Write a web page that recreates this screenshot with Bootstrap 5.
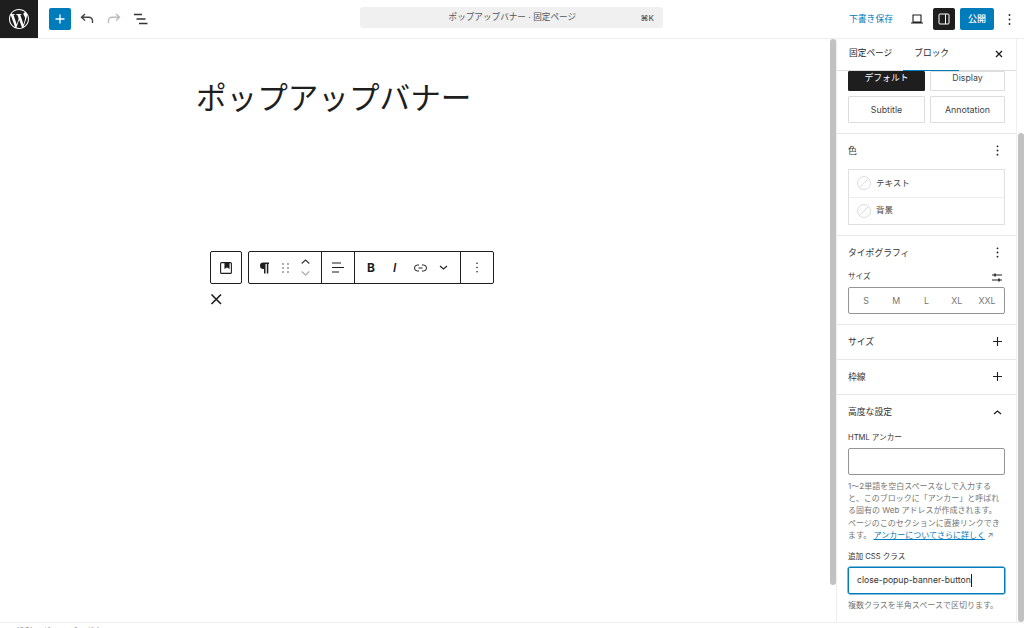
<!DOCTYPE html>
<html lang="ja"><head><meta charset="utf-8">
<link href="https://cdn.jsdelivr.net/npm/bootstrap@5.3.0/dist/css/bootstrap.min.css" rel="stylesheet">
<style>
html,body{height:628px;overflow:hidden;background:#fff}
body{font-family:Inter,"Noto Sans CJK JP",sans-serif;color:#1e1e1e;font-size:9px}
svg{display:block}
.ed-top{height:39px;border-bottom:1px solid #eee}
.ed-logo{width:38px;height:38px;background:#1e1e1e}
.ed-add{width:22px;height:22px;background:#007cba;border-radius:2px;margin-left:11px}
.ed-ic{width:27px}
.ed-undo{margin-left:9px}
.ed-cmd{position:absolute;left:360px;top:7px;width:303px;height:21px;background:#f0f0f0;border-radius:3px;font-size:8.6px;color:#555}
.ed-cmd span:first-child{flex:1;text-align:center;padding-left:24px}
.ed-cmd b{font-weight:500;padding-right:9px;font-size:8px}
.ed-save{color:#007cba;font-size:8.8px;margin-right:18px}
.ed-side-btn{width:22px;height:22px;background:#1e1e1e;border-radius:2px;margin:0 5px 0 10px}
.ed-pub{width:34px;height:22px;background:#007cba;color:#fff;border-radius:2px;font-size:9px;font-weight:500}
.ed-kebab{width:30px}
.ed-body{height:583px}
.ed-canvas{width:829px;position:relative}
.ed-title{font-size:30.6px;line-height:40px;position:absolute;left:196px;top:37px;margin:0;font-weight:400;font-family:"Noto Sans CJK JP",sans-serif}
.ed-bar{position:absolute;left:210px;top:212px;height:33px;gap:6px}
.ed-group{border:1px solid #1e1e1e;border-radius:2px;height:33px;background:#fff}
.ed-block{width:32px}
.ed-main{width:246px}
.ed-seg{height:100%;border-right:1px solid #1e1e1e}
.ed-seg1{width:73px;padding-left:10px;gap:12px}
.ed-seg2{width:33px}
.ed-seg3{width:106px;padding-left:12px}
.ed-b{font-size:12px;font-weight:700;width:24px;line-height:1}
.ed-i{font-size:12px;font-style:italic;font-weight:600;width:23px;padding-left:2px;line-height:1}
.ed-link{margin-right:12px}
.ed-x{position:absolute;left:209px;top:253px}
.ed-scroll{width:7px;padding-left:1px}
.ed-thumb{width:6px;background:#c1c1c1;border-radius:3px;height:546px}
.ed-thumb2{margin-top:94px;height:489px}
.ed-side{width:181px;border-left:1px solid #eee;border-right:1px solid #eee;position:relative}
.ed-tabs{height:32px;border-bottom:1px solid #ddd;padding:0 0 2px 12px;font-size:8.7px;position:relative}
.ed-tab2{margin-left:22px;position:relative}
.ed-ul{position:absolute;left:66px;width:56px;bottom:-1px;height:1.5px;background:#007cba}
.ed-tabx{position:absolute;right:13px;top:11px}
.ed-styles{display:grid;grid-template-columns:77px 75px;grid-template-rows:20px 27px;gap:5px;padding:0 11px;height:62px}
.ed-sty{border:1px solid #ddd;font-size:8.8px;color:#444;border-radius:1px}
.ed-sty.on{background:#1e1e1e;color:#fff;border-color:#1e1e1e}
.ed-clip{padding-bottom:6px}
.ed-panel{border-top:1px solid #e8e8e8;padding:0 11px;position:relative}
.ed-head{height:33px;font-size:8.8px;color:#333;margin-bottom:1px}
.ed-colors{border:1px solid #e0e0e0;height:56px;margin-top:2px;margin-bottom:10px}
.ed-crow{height:27px;padding:0 0 1px 8px;gap:5px;font-size:8.5px;color:#444}
.ed-crow+.ed-crow{border-top:1px solid #eee}
.ed-dis{width:14px;height:14px;border-radius:50%;border:1px solid #ddd;background:linear-gradient(135deg,transparent 48%,#ddd 48%,#ddd 54%,transparent 54%)}
.ed-lab{font-size:7.6px;color:#333}
.ed-rule{height:14px}
.ed-size{display:grid;grid-template-columns:repeat(5,1fr);text-align:center;align-items:center;border:1px solid #949494;border-radius:2px;height:27px;font-size:8.8px;color:#757575;padding:0 2px;margin:3px 0 10px}
.ed-input{border:1px solid #949494;border-radius:2px;height:27px;margin-top:4px;font-size:8.6px;color:#333;padding-left:8px}
.ed-input.foc{border-color:#007cba;box-shadow:0 0 0 .5px #007cba}
.ed-caret{width:1px;height:13px;background:#1e1e1e}
.ed-help{font-size:8px;line-height:12.2px;color:#757575;margin-top:5px;width:155px}
.ed-help a{color:#007cba}
.ed-help2{margin-top:5px}
.ed-lab1{margin-top:4px;line-height:12px}
.ed-lab2{margin-top:10px;line-height:12px}
.ed-dots{margin-right:6px}
.ed-plus{margin-right:3px}
.ed-sliders{margin-right:3px}
.ed-foot{height:6px;border-top:1px solid #eee;font-size:9px;color:#757575;padding:3px 0 0 16px;line-height:12px;overflow:hidden;white-space:nowrap}
</style></head>
<body>
<header class="ed-top d-flex align-items-center position-relative">
  <div class="ed-logo d-flex align-items-center justify-content-center">
    <svg width="20" height="20" viewBox="0 0 24 24" fill="#fff"><path d="M21.469 6.825c.84 1.537 1.318 3.3 1.318 5.175 0 3.979-2.156 7.456-5.363 9.325l3.295-9.527c.615-1.54.82-2.771.82-3.864 0-.405-.026-.78-.07-1.11m-7.981.105c.647-.03 1.232-.105 1.232-.105.582-.075.514-.93-.067-.899 0 0-1.755.135-2.88.135-1.064 0-2.85-.15-2.85-.15-.585-.03-.661.855-.075.885 0 0 .54.061 1.125.09l1.68 4.605-2.37 7.08L5.354 6.9c.649-.03 1.234-.1 1.234-.1.585-.075.516-.93-.065-.896 0 0-1.746.138-2.874.138-.2 0-.438-.008-.69-.015C4.911 3.15 8.235 1.215 12 1.215c2.809 0 5.365 1.072 7.286 2.833-.046-.003-.091-.009-.141-.009-1.06 0-1.812.923-1.812 1.914 0 .89.513 1.643 1.06 2.531.411.72.89 1.643.89 2.977 0 .915-.354 1.994-.821 3.479l-1.075 3.585-3.9-11.61.001.014zM12 22.784c-1.059 0-2.081-.153-3.048-.437l3.237-9.406 3.315 9.087c.024.053.05.101.078.149-1.12.393-2.325.609-3.582.609M1.211 12c0-1.564.336-3.05.935-4.39L7.29 21.709C3.694 19.96 1.212 16.271 1.211 12M12 0C5.385 0 0 5.385 0 12s5.385 12 12 12 12-5.385 12-12S18.615 0 12 0"/></svg>
  </div>
  <div class="ed-add d-flex align-items-center justify-content-center"><svg width="12" height="12" viewBox="0 0 12 12"><path d="M6 1.500v9M1.500 6h9" stroke="#fff" stroke-width="1.300"/></svg></div>
  <div class="d-flex align-items-center ed-undo">
    <div class="ed-ic"><svg width="14" height="12" viewBox="0 0 14 12" fill="none" stroke="#444" stroke-width="1.400"><path d="M5 1 1.500 4.300 5 7.500M1.500 4.300H9a3.500 3.500 0 0 1 3.500 3.500V10"/></svg></div>
    <div class="ed-ic"><svg width="14" height="12" viewBox="0 0 14 12" fill="none" stroke="#bbb" stroke-width="1.400"><path d="M9 1l3.500 3.300L9 7.500M12.500 4.300H5A3.500 3.500 0 0 0 1.500 7.800V10"/></svg></div>
    <div class="ed-ic"><svg width="14" height="12" viewBox="0 0 14 12" stroke="#333" stroke-width="1.300"><path d="M0 1.500h8M2.500 6h9M5 10.500h8.500"/></svg></div>
  </div>
  <div class="ed-cmd d-flex align-items-center"><span>ポップアップバナー · 固定ページ</span><b>⌘K</b></div>
  <div class="ms-auto d-flex align-items-center">
    <span class="ed-save">下書き保存</span>
    <svg width="12" height="10" viewBox="0 0 12 10" fill="none" stroke="#1e1e1e" stroke-width="1.100"><path d="M2 1h8v7H2zM0 9h12"/></svg>
    <div class="ed-side-btn d-flex align-items-center justify-content-center"><svg width="12" height="12" viewBox="0 0 12 12" fill="none" stroke="#fff" stroke-width="1"><rect x="1" y="1" width="10" height="10" rx="1"/><path d="M7.500 1v10"/></svg></div>
    <div class="ed-pub d-flex align-items-center justify-content-center">公開</div>
    <div class="ed-kebab d-flex align-items-center justify-content-center"><svg width="3" height="13" viewBox="0 0 3 13" fill="#1e1e1e"><circle cx="1.500" cy="2" r=".9"/><circle cx="1.500" cy="6.500" r=".9"/><circle cx="1.500" cy="11" r=".9"/></svg></div>
  </div>
</header>
<div class="ed-body d-flex">
  <main class="ed-canvas">
    <h1 class="ed-title">ポップアップバナー</h1>
    <div class="ed-bar d-flex">
      <div class="ed-group ed-block d-flex align-items-center justify-content-center"><svg width="12" height="12" viewBox="0 0 12 12" fill="none" stroke="#1e1e1e" stroke-width="1.100"><rect x=".6" y=".6" width="10.800" height="10.800" rx="1"/><path d="M5 .6h4v5.500L7 4.800 5 6.100z" fill="#1e1e1e"/></svg></div>
      <div class="ed-group ed-main d-flex align-items-center">
        <div class="ed-seg ed-seg1 d-flex align-items-center">
          <svg width="11" height="12" viewBox="0 0 11 12" fill="#1e1e1e"><path d="M10 .5H4.300a3.300 3.300 0 0 0 0 6.600H5v4.400h1.500V2h1.300v9.500h1.500V2H10z"/></svg>
          <svg width="7" height="10" viewBox="0 0 7 10" fill="#444"><circle cx="1" cy="1" r=".8"/><circle cx="6" cy="1" r=".8"/><circle cx="1" cy="5" r=".8"/><circle cx="6" cy="5" r=".8"/><circle cx="1" cy="9" r=".8"/><circle cx="6" cy="9" r=".8"/></svg>
          <svg width="9" height="17" viewBox="0 0 9 17" fill="none"><path d="M.7 4.500 4.500 1l3.800 3.500" stroke="#333" stroke-width="1.100"/><path d="M.7 12.500 4.500 16l3.800-3.500" stroke="#aaa" stroke-width="1.100"/></svg>
        </div>
        <div class="ed-seg ed-seg2 d-flex align-items-center justify-content-center"><svg width="12" height="11" viewBox="0 0 12 11" stroke="#1e1e1e" stroke-width="1.200"><path d="M0 1h9M0 5.500h12M0 10h7"/></svg></div>
        <div class="ed-seg ed-seg3 d-flex align-items-center">
          <span class="ed-b">B</span>
          <span class="ed-i">I</span>
          <svg class="ed-link" width="13" height="8" viewBox="0 0 13 8" fill="none" stroke="#1e1e1e" stroke-width="1"><path d="M5 1H3.500a3 3 0 0 0 0 6H5M8 1h1.500a3 3 0 0 1 0 6H8M4.500 4h4"/></svg>
          <svg width="9" height="6" viewBox="0 0 9 6" fill="none" stroke="#1e1e1e" stroke-width="1.100"><path d="M1 1l3.500 3L8 1"/></svg>
        </div>
        <div class="d-flex align-items-center justify-content-center flex-fill"><svg width="3" height="11" viewBox="0 0 3 11" fill="#1e1e1e"><circle cx="1" cy="1.300" r=".8"/><circle cx="1" cy="5.500" r=".8"/><circle cx="1" cy="9.700" r=".8"/></svg></div>
      </div>
    </div>
    <div class="ed-x"><svg width="14" height="14" viewBox="0 0 14 14" stroke="#1e1e1e" stroke-width="1.600"><path d="M2.500 2.500l9.500 9.500M12 2.500 2.500 12"/></svg></div>
  </main>
  <div class="ed-scroll"><div class="ed-thumb"></div></div>
  <aside class="ed-side">
    <div class="ed-tabs d-flex align-items-center"><span>固定ページ</span><span class="ed-tab2">ブロック</span><i class="ed-ul"></i>
      <svg class="ed-tabx" width="8" height="8" viewBox="0 0 8 8" stroke="#1e1e1e" stroke-width="1.300"><path d="M1 1l6 6M7 1 1 7"/></svg></div>
    <div class="ed-styles">
      <div class="ed-sty ed-clip on d-flex align-items-center justify-content-center">デフォルト</div>
      <div class="ed-sty ed-clip d-flex align-items-center justify-content-center">Display</div>
      <div class="ed-sty d-flex align-items-center justify-content-center">Subtitle</div>
      <div class="ed-sty d-flex align-items-center justify-content-center">Annotation</div>
    </div>
    <section class="ed-panel"><div class="ed-head d-flex align-items-center justify-content-between"><span>色</span><svg class="ed-dots" width="3" height="11" viewBox="0 0 3 11" fill="#1e1e1e"><circle cx="1.500" cy="1.300" r=".9"/><circle cx="1.500" cy="5.500" r=".9"/><circle cx="1.500" cy="9.700" r=".9"/></svg></div>
      <div class="ed-colors"><div class="ed-crow d-flex align-items-center"><i class="ed-dis"></i>テキスト</div><div class="ed-crow d-flex align-items-center"><i class="ed-dis"></i>背景</div></div></section>
    <section class="ed-panel"><div class="ed-head d-flex align-items-center justify-content-between"><span>タイポグラフィ</span><svg class="ed-dots" width="3" height="11" viewBox="0 0 3 11" fill="#1e1e1e"><circle cx="1.500" cy="1.300" r=".9"/><circle cx="1.500" cy="5.500" r=".9"/><circle cx="1.500" cy="9.700" r=".9"/></svg></div>
      <div class="ed-rule d-flex justify-content-between align-items-center ed-lab"><span>サイズ</span><svg class="ed-sliders" width="10" height="9" viewBox="0 0 10 9" stroke="#1e1e1e"><path d="M0 2h10M0 7h10"/><path d="M3 .5v3M7 5.500v3" stroke-width="1.500"/></svg></div>
      <div class="ed-size"><span>S</span><span>M</span><span>L</span><span>XL</span><span>XXL</span></div></section>
    <section class="ed-panel"><div class="ed-head d-flex align-items-center justify-content-between"><span>サイズ</span><svg class="ed-plus" width="9" height="9" viewBox="0 0 9 9" stroke="#1e1e1e" stroke-width="1.100"><path d="M4.500 0v9M0 4.500h9"/></svg></div></section>
    <section class="ed-panel"><div class="ed-head d-flex align-items-center justify-content-between"><span>枠線</span><svg class="ed-plus" width="9" height="9" viewBox="0 0 9 9" stroke="#1e1e1e" stroke-width="1.100"><path d="M4.500 0v9M0 4.500h9"/></svg></div></section>
    <section class="ed-panel"><div class="ed-head d-flex align-items-center justify-content-between"><span>高度な設定</span><svg class="ed-plus" width="9" height="6" viewBox="0 0 9 6" fill="none" stroke="#1e1e1e" stroke-width="1.300"><path d="M1 5l3.500-3L8 5"/></svg></div>
      <div class="ed-lab ed-lab1">HTML アンカー</div>
      <div class="ed-input"></div>
      <div class="ed-help">1〜2単語を空白スペースなしで入力すると、このブロックに「アンカー」と呼ばれる固有の Web アドレスが作成されます。ページのこのセクションに直接リンクできます。 <a href="#">アンカーについてさらに詳しく</a> ↗</div>
      <div class="ed-lab ed-lab2">追加 CSS クラス</div>
      <div class="ed-input foc d-flex align-items-center">close-popup-banner-button<i class="ed-caret"></i></div>
      <div class="ed-help ed-help2">複数クラスを半角スペースで区切ります。</div></section>
  </aside>
  <div class="ed-scroll"><div class="ed-thumb ed-thumb2"></div></div>
</div>
<footer class="ed-foot">投稿 &nbsp; グループ &nbsp; ボタン</footer>
</body></html>
